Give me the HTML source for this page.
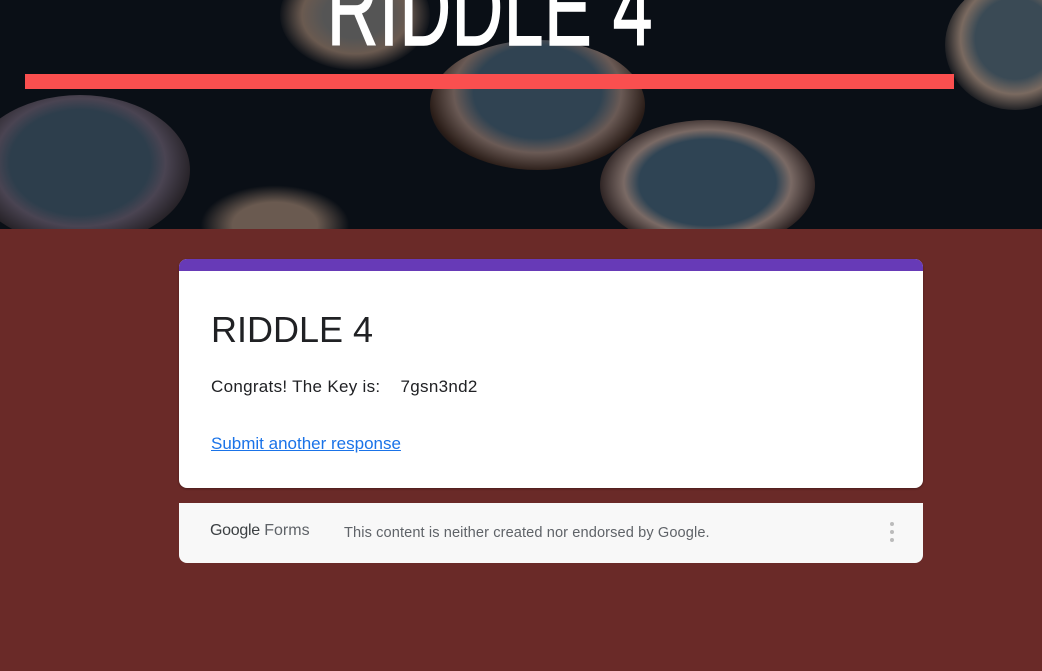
<!DOCTYPE html>
<html><head><meta charset="utf-8"><style>
html,body{margin:0;padding:0;width:1042px;height:671px;overflow:hidden;background:#6a2a28;font-family:"Liberation Sans",sans-serif}
.hdr{position:absolute;left:0;top:0;width:1042px;height:229px;background:#0a0f16;overflow:hidden}
.key{position:absolute;border-radius:50%}
.title{position:absolute;left:0;width:980px;top:-46px;text-align:center;color:#fff;font-family:"Liberation Sans Narrow","Liberation Sans",sans-serif;font-size:108px;line-height:108px;letter-spacing:1px;transform:scaleX(0.66);transform-origin:490px 0;-webkit-text-stroke:1.5px #fff}
.bar{position:absolute;left:25px;top:74px;width:929px;height:15px;background:#fa4f4f}
.card{position:absolute;left:179px;top:259px;width:744px;height:229px;background:#fff;border-radius:8px;overflow:hidden;box-shadow:0 1px 2px rgba(0,0,0,.3)}
.card .top{height:12px;background:#673ab7}
.h{position:absolute;left:32px;top:50px;font-size:36px;color:#202124}
.p{position:absolute;left:32px;top:118px;font-size:17px;color:#202124;letter-spacing:0.3px}
.a{position:absolute;left:32px;top:175px;font-size:17px;color:#1a73e8;text-decoration:underline}
.foot{position:absolute;left:179px;top:503px;width:744px;height:60px;background:#f8f8f8;border-radius:0 0 8px 8px}
.gf{position:absolute;left:31px;top:19px;font-size:16px;color:#5f6368}
.gf b{font-weight:normal;color:#3c4043;letter-spacing:-0.3px}
.note{position:absolute;left:165px;top:22px;font-size:14.6px;color:#5f6368;letter-spacing:0.1px}
.dots{position:absolute;left:711px;top:19px;width:4px}
.dots i{display:block;width:4px;height:4px;border-radius:50%;background:#bbb;margin-bottom:4px}
</style></head><body>
<div class="hdr">
<div class="key" style="left:-30px;top:95px;width:220px;height:150px;background:radial-gradient(ellipse at 50% 45%,#2d3e4c 0 45%,#4a4452 55%,#201c20 75%,transparent 80%)"></div>
<div class="key" style="left:430px;top:40px;width:215px;height:130px;background:radial-gradient(ellipse at 50% 40%,#304352 0 42%,#6a5a55 55%,#2a1d18 72%,transparent 78%)"></div>
<div class="key" style="left:600px;top:120px;width:215px;height:130px;background:radial-gradient(ellipse at 50% 48%,#2f4454 0 45%,#7a6a65 55%,#2a2020 72%,transparent 78%)"></div>
<div class="key" style="left:945px;top:-20px;width:140px;height:130px;background:radial-gradient(ellipse at 50% 45%,#3a4a55 0 40%,#7a6a60 55%,transparent 75%)"></div>
<div class="key" style="left:280px;top:-40px;width:150px;height:110px;background:radial-gradient(ellipse at 50% 50%,#555 0 30%,#6a5a50 50%,transparent 72%)"></div>
<div class="key" style="left:200px;top:185px;width:150px;height:80px;background:radial-gradient(ellipse at 50% 50%,#6a5a50 0 40%,transparent 70%)"></div>
<div class="title">RIDDLE 4</div>
<div class="bar"></div>
</div>
<div class="card"><div class="top"></div>
<div class="h">RIDDLE 4</div>
<div class="p">Congrats! The Key is:&nbsp;&nbsp;&nbsp; 7gsn3nd2</div>
<div class="a">Submit another response</div>
</div>
<div class="foot">
<div class="gf"><b>Google</b> Forms</div>
<div class="note">This content is neither created nor endorsed by Google.</div>
<div class="dots"><i></i><i></i><i></i></div>
</div>
</body></html>
